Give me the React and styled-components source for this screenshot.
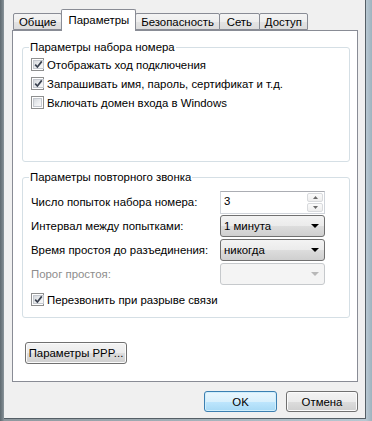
import React from "react";
import styled, { createGlobalStyle } from "styled-components";

const GlobalStyle = createGlobalStyle`
  html, body {
    margin: 0;
    padding: 0;
    background: #6f7a80;
  }
  body {
    font-family: "Liberation Sans", Arial, sans-serif;
    font-size: 11.4px;
    color: #000;
  }
`;

const Frame = styled.div`
  width: 372px;
  height: 421px;
  box-sizing: border-box;
  display: flex;
  padding: 0 6px 2px 4px;
  background: linear-gradient(
    90deg,
    #5f6a70 0,
    #7c878d 3px,
    #8e989e 4px,
    #b8c8d2 366px,
    #9fb3bf 372px
  );
`;

const Dialog = styled.div`
  flex: 1;
  display: flex;
  flex-direction: column;
  background: #f0f0f0;
  border-right: 1px solid #555f66;
  border-bottom: 1px solid #555f66;
  padding: 9px 7px 0 8px;
`;

const TabStrip = styled.div`
  display: flex;
  align-items: flex-end;
  height: 21px;
  padding-left: 1px;
`;

const Tab = styled.div`
  position: relative;
  box-sizing: border-box;
  min-width: 41px;
  text-align: center;
  height: ${(p) => (p.$active ? "22px" : "17px")};
  margin-bottom: ${(p) => (p.$active ? "-1px" : "0")};
  margin-right: -1px;
  padding: ${(p) => (p.$active ? "2px 6px 0" : "0 5px")};
  line-height: 16px;
  border: 1px solid #898c95;
  border-bottom: ${(p) => (p.$active ? "none" : "1px solid #898c95")};
  border-radius: 2px 2px 0 0;
  z-index: ${(p) => (p.$active ? 2 : 1)};
  background: ${(p) =>
    p.$active
      ? "#fff"
      : "linear-gradient(#f4f4f4 0%, #eeeeee 50%, #e4e4e4 51%, #dcdcdc 100%)"};
`;

const Panel = styled.div`
  box-sizing: border-box;
  height: 352px;
  background: #fff;
  border: 1px solid #898c95;
  padding: 9px 7px 0 9px;
`;

const Group = styled.fieldset`
  box-sizing: border-box;
  margin: ${(p) => p.$top || 0}px 0 0;
  padding: 0 8px;
  min-width: 0;
  height: ${(p) => p.$height}px;
  border: 1px solid #d5dfe5;
  border-radius: 3px;
`;

const Legend = styled.legend`
  padding: 0 1px;
  margin-left: -2px;
  line-height: 15px;
`;

const CheckRow = styled.label`
  display: flex;
  align-items: center;
  height: 19px;
  gap: 3px;
  margin-top: ${(p) => p.$top || 0}px;
  color: ${(p) => (p.$disabled ? "#8d8d8d" : "#000")};
`;

const Box = styled.span`
  box-sizing: border-box;
  width: 13px;
  height: 13px;
  border: 1px solid #8e8f8f;
  background: #fff;
  padding: 1px;
  display: flex;
`;

const BoxInner = styled.span`
  flex: 1;
  display: flex;
  align-items: center;
  justify-content: center;
  border: 1px solid #c4c8ce;
  background: linear-gradient(135deg, #d6d9dd 0%, #eef0f2 60%, #f8f8f8 100%);
`;

const FormGrid = styled.div`
  display: grid;
  grid-template-columns: 189px 105px;
  grid-auto-rows: 24px;
  align-items: center;
  margin-top: 5px;
`;

const FieldLabel = styled.span`
  color: ${(p) => (p.$disabled ? "#8d8d8d" : "#000")};
`;

const Spin = styled.div`
  box-sizing: border-box;
  height: 23px;
  display: flex;
  border: 1px solid #d0d4da;
  border-top-color: #abadb3;
  background: #fff;
`;

const SpinValue = styled.span`
  flex: 1;
  padding: 3px 0 0 3px;
`;

const SpinButtons = styled.div`
  width: 16px;
  display: flex;
  flex-direction: column;
  padding: 1px 1px 1px 0;
  gap: 1px;
`;

const SpinButton = styled.span`
  flex: 1;
  display: flex;
  align-items: center;
  justify-content: center;
  border: 1px solid #d8dadd;
  border-radius: 2px;
  background: linear-gradient(#fbfbfb, #eeeeee);
`;

const Combo = styled.div`
  box-sizing: border-box;
  height: 22px;
  display: flex;
  align-items: center;
  padding: 0 5px 0 3px;
  border: 1px solid ${(p) => (p.$disabled ? "#c6c9cc" : "#707070")};
  border-radius: 3px;
  background: ${(p) =>
    p.$disabled
      ? "#f4f4f4"
      : "linear-gradient(#f3f3f3 0%, #ebebeb 50%, #dddddd 51%, #cfcfcf 100%)"};
`;

const ComboText = styled.span`
  flex: 1;
`;

const Arrow = styled.span`
  width: 0;
  height: 0;
  border-left: 4px solid transparent;
  border-right: 4px solid transparent;
  border-top: 4px solid ${(p) => (p.$disabled ? "#b8b8b8" : "#000")};
`;

const Button = styled.button`
  box-sizing: border-box;
  height: ${(p) => p.$h || 21}px;
  width: ${(p) => p.$w}px;
  margin: ${(p) => p.$margin || 0};
  padding: 0;
  font-family: inherit;
  font-size: inherit;
  color: #000;
  border-radius: 3px;
  border: 1px solid ${(p) => (p.$primary ? "#3c7fb1" : "#707070")};
  box-shadow: inset 0 0 0 1px ${(p) => (p.$primary ? "#cfeefc" : "#fbfbfb")};
  background: ${(p) =>
    p.$primary
      ? "linear-gradient(#eaf6fd 0%, #d9f0fc 50%, #bee6fd 51%, #a7d9f5 100%)"
      : "linear-gradient(#f3f3f3 0%, #ebebeb 50%, #dddddd 51%, #cfcfcf 100%)"};
`;

const Footer = styled.div`
  display: flex;
  justify-content: flex-end;
  gap: 9px;
  padding-top: 9px;
`;

const Check = () => (
  <svg width="9" height="9" viewBox="0 0 9 9">
    <path
      d="M1.2 4.6 L3.4 7 L7.8 1.4"
      fill="none"
      stroke="#3a4250"
      strokeWidth="1.7"
    />
  </svg>
);

const CheckBox = ({ checked, children, top }) => (
  <CheckRow $top={top}>
    <Box>
      <BoxInner>{checked && <Check />}</BoxInner>
    </Box>
    {children}
  </CheckRow>
);

const UpDown = ({ up }) => (
  <svg width="5" height="3" viewBox="0 0 5 3">
    <path d={up ? "M0 3 L2.5 0 L5 3 Z" : "M0 0 L2.5 3 L5 0 Z"} fill="#6b6b6b" />
  </svg>
);

const App = () => {
  const tabs = ["Общие", "Параметры", "Безопасность", "Сеть", "Доступ"];

  return (
    <Frame>
      <GlobalStyle />
      <Dialog>
        <TabStrip>
          {tabs.map((t) => (
            <Tab key={t} $active={t === "Параметры"}>
              {t}
            </Tab>
          ))}
        </TabStrip>
        <Panel>
          <Group $height={122}>
            <Legend>Параметры набора номера</Legend>
            <CheckBox checked>Отображать ход подключения</CheckBox>
            <CheckBox checked>Запрашивать имя, пароль, сертификат и т.д.</CheckBox>
            <CheckBox>Включать домен входа в Windows</CheckBox>
          </Group>

          <Group $height={148} $top={8}>
            <Legend>Параметры повторного звонка</Legend>
            <FormGrid>
              <FieldLabel>Число попыток набора номера:</FieldLabel>
              <Spin>
                <SpinValue>3</SpinValue>
                <SpinButtons>
                  <SpinButton>
                    <UpDown up />
                  </SpinButton>
                  <SpinButton>
                    <UpDown />
                  </SpinButton>
                </SpinButtons>
              </Spin>

              <FieldLabel>Интервал между попытками:</FieldLabel>
              <Combo>
                <ComboText>1 минута</ComboText>
                <Arrow />
              </Combo>

              <FieldLabel>Время простоя до разъединения:</FieldLabel>
              <Combo>
                <ComboText>никогда</ComboText>
                <Arrow />
              </Combo>

              <FieldLabel $disabled>Порог простоя:</FieldLabel>
              <Combo $disabled>
                <ComboText />
                <Arrow $disabled />
              </Combo>
            </FormGrid>
            <CheckBox checked top={4}>
              Перезвонить при разрыве связи
            </CheckBox>
          </Group>

          <Button $w={102} $h={22} $margin="24px 0 0 3px">
            Параметры PPP...
          </Button>
        </Panel>
        <Footer>
          <Button $primary $w={73}>
            OK
          </Button>
          <Button $w={72}>Отмена</Button>
        </Footer>
      </Dialog>
    </Frame>
  );
};

export default App;
